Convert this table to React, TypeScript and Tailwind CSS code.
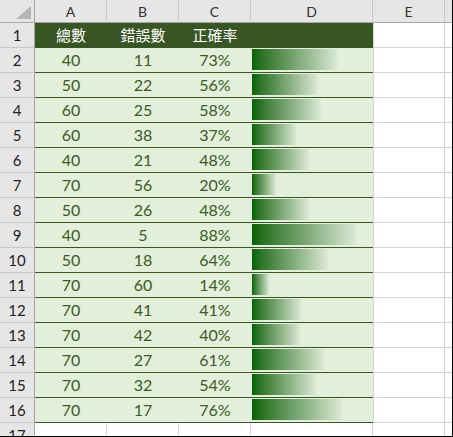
const rows = [
  [40, 11, 73],
  [50, 22, 56],
  [60, 25, 58],
  [60, 38, 37],
  [40, 21, 48],
  [70, 56, 20],
  [50, 26, 48],
  [40, 5, 88],
  [50, 18, 64],
  [70, 60, 14],
  [70, 41, 41],
  [70, 42, 40],
  [70, 27, 61],
  [70, 32, 54],
  [70, 17, 76],
];

const font = { fontFamily: "Lato, 'Noto Sans CJK TC', sans-serif" };

// data bar length, min 14% -> 17px, max 88% -> 104px
const barWidth = (p: number) => Math.round(17 + ((p - 14) * 87) / 74);

function RowNum({ n, h = "h-[25px]" }: { n: number; h?: string }) {
  return (
    <div
      className={`w-[35px] shrink-0 ${h} flex items-center justify-center bg-[#e6e6e6] border-r border-b border-r-[#a6a6a6] border-b-[#c8c8c8] text-[15px] text-[#222]`}
    >
      {n}
    </div>
  );
}

export default function App() {
  return (
    <div className="w-[453px] h-[437px] overflow-hidden bg-white border-r border-b border-black" style={font}>
      {/* column headers */}
      <div className="flex h-[23px]">
        <div className="w-[35px] shrink-0 bg-[#e6e6e6] border-r border-b border-[#a6a6a6] relative">
          <svg className="absolute left-0 top-0" width="34" height="22" viewBox="0 0 34 22">
            <polygon points="31,6 31,19 16,19" fill="#b5b5b5" />
          </svg>
        </div>
        {["A", "B", "C", "D", "E"].map((c) => (
          <div
            key={c}
            className={`${c === "D" ? "w-[122px]" : "w-[72px]"} shrink-0 bg-[#e6e6e6] border-r border-b border-r-[#c8c8c8] border-b-[#a6a6a6] flex items-center justify-center text-[14px] text-[#333]`}
          >
            {c}
          </div>
        ))}
        <div className="flex-1 bg-[#e6e6e6] border-b border-[#a6a6a6]" />
      </div>

      {/* row 1: table header */}
      <div className="flex h-[25px]">
        <RowNum n={1} />
        <div className="w-[288px] shrink-0 flex bg-[#375623] text-white text-[15px]">
          <div className="w-[72px] flex items-center justify-center">總數</div>
          <div className="w-[72px] flex items-center justify-center">錯誤數</div>
          <div className="w-[72px] flex items-center justify-center">正確率</div>
          <div className="w-[72px]" />
        </div>
        <div className="w-[50px] shrink-0 bg-[#375623]" />
        <div className="w-[72px] shrink-0 border-l border-r border-b border-[#d4d4d4]" />
        <div className="flex-1 border-b border-[#d4d4d4]" />
      </div>

      {rows.map((r, i) => (
        <div key={i} className="flex h-[25px]">
          <RowNum n={i + 2} />
          <div className="w-[338px] shrink-0 flex bg-[#e2efda] border-b border-[#375623] text-[16px] text-[#3b5a26]">
            <div className="w-[72px] flex items-center justify-center">{r[0]}</div>
            <div className="w-[72px] flex items-center justify-center">{r[1]}</div>
            <div className="w-[72px] flex items-center justify-center">{r[2]}%</div>
            <div className="w-[122px] pl-px pt-px pb-[2px]">
              <div
                className="h-full bg-gradient-to-r from-[#006400] to-[#dce9d6]"
                style={{ width: barWidth(r[2]) }}
              />
            </div>
          </div>
          <div className="w-[72px] shrink-0 border-l border-r border-b border-[#d4d4d4]" />
          <div className="flex-1 border-b border-[#d4d4d4]" />
        </div>
      ))}

      {/* row 17, cut off */}
      <div className="flex h-[25px]">
        <RowNum n={17} />
        <div className="w-[72px] shrink-0 border-r border-[#d4d4d4]" />
        <div className="w-[72px] shrink-0 border-r border-[#d4d4d4]" />
        <div className="w-[72px] shrink-0 border-r border-[#d4d4d4]" />
        <div className="w-[122px] shrink-0 border-r border-[#d4d4d4]" />
        <div className="w-[72px] shrink-0 border-r border-[#d4d4d4]" />
        <div className="flex-1" />
      </div>
    </div>
  );
}
